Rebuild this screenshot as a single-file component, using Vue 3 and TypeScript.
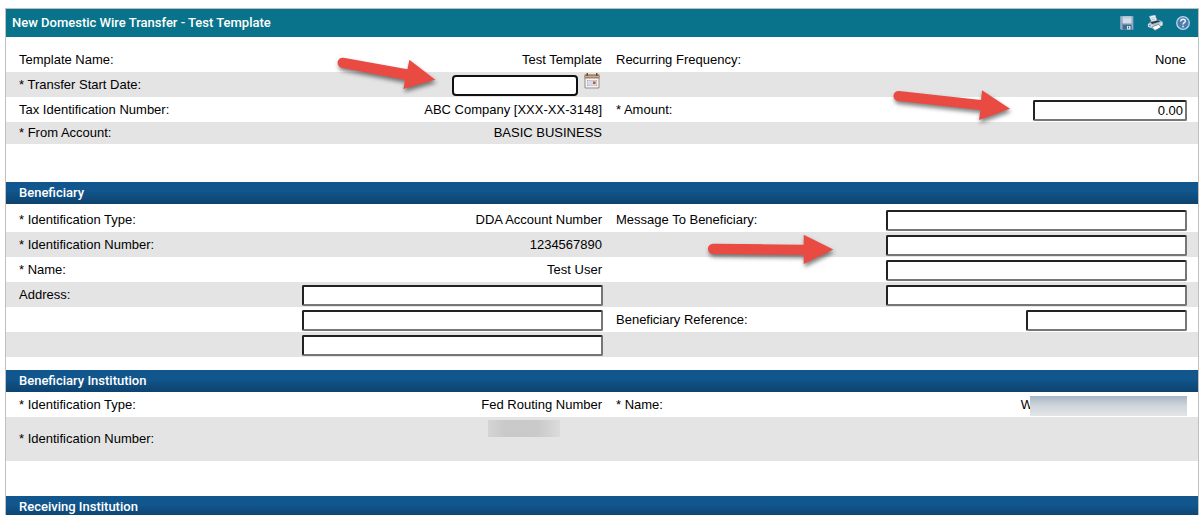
<script setup lang="ts">
import { ref } from 'vue'

interface Cell {
  id?: string
  label?: string
  value?: string
  kind?: 'text' | 'input' | 'date' | 'masked' | 'maskedTail'
  size?: 'wide' | 'mid' | 'small'
  aria?: string
}
interface Row {
  left: Cell
  right: Cell
  height?: 'first' | 'short' | 'tall'
}
interface Section {
  title: string
  name: string
  rows: Row[]
}

const form = ref<Record<string, string>>({ amount: '0.00' })

const groups: Section[] = [
  {
    title: '',
    name: 'general',
    rows: [
      {
        left: { label: 'Template Name:', value: 'Test Template' },
        right: { label: 'Recurring Frequency:', value: 'None' },
        height: 'first',
      },
      { left: { id: 'startDate', label: '* Transfer Start Date:', kind: 'date' }, right: {} },
      {
        left: { label: 'Tax Identification Number:', value: 'ABC Company [XXX-XX-3148]' },
        right: { id: 'amount', label: '* Amount:', kind: 'input', size: 'small' },
      },
      { left: { label: '* From Account:', value: 'BASIC BUSINESS' }, right: {}, height: 'short' },
    ],
  },
  {
    title: 'Beneficiary',
    name: 'beneficiary',
    rows: [
      {
        left: { label: '* Identification Type:', value: 'DDA Account Number' },
        right: { id: 'message1', label: 'Message To Beneficiary:', kind: 'input', size: 'wide' },
      },
      {
        left: { label: '* Identification Number:', value: '1234567890' },
        right: { id: 'message2', kind: 'input', size: 'wide', aria: 'Message line 2' },
      },
      {
        left: { label: '* Name:', value: 'Test User' },
        right: { id: 'message3', kind: 'input', size: 'wide', aria: 'Message line 3' },
      },
      {
        left: { id: 'address1', label: 'Address:', kind: 'input', size: 'wide' },
        right: { id: 'message4', kind: 'input', size: 'wide', aria: 'Message line 4' },
      },
      {
        left: { id: 'address2', kind: 'input', size: 'wide', aria: 'Address line 2' },
        right: { id: 'reference', label: 'Beneficiary Reference:', kind: 'input', size: 'mid' },
      },
      { left: { id: 'address3', kind: 'input', size: 'wide', aria: 'Address line 3' }, right: {} },
    ],
  },
  {
    title: 'Beneficiary Institution',
    name: 'institution',
    rows: [
      {
        left: { label: '* Identification Type:', value: 'Fed Routing Number' },
        right: { label: '* Name:', value: 'W', kind: 'maskedTail' },
      },
      { left: { label: '* Identification Number:', kind: 'masked' }, right: {}, height: 'tall' },
    ],
  },
  { title: 'Receiving Institution', name: 'receiving', rows: [] },
]
</script>

<template>
  <main class="page">
    <form class="panel" @submit.prevent>
      <header class="title-bar">
        <h1>New Domestic Wire Transfer - Test Template</h1>
        <div class="tools">
          <button type="button" class="icon-button" aria-label="Save">
            <svg width="16" height="16" viewBox="0 0 16 16">
              <path d="M1 1h13.500v14H2L1 14z" fill="#6f93b5" />
              <path d="M1.500 1.500H3V14H1.500zM12.500 1.500H14V14h-1.500z" fill="#91adc8" />
              <path d="M3.500 1.500h9v7h-9z" fill="#d3dee8" />
              <path d="M3.500 1.500h9v2h-9z" fill="#b9cbdb" />
              <path d="M4 10h8.500v4.500H4z" fill="#456b8d" />
              <path d="M8 11h3.500v3.500H8z" fill="#dfe8ef" />
              <path d="M9 11.500h1v2H9z" fill="#426887" />
            </svg>
          </button>
          <button type="button" class="icon-button" aria-label="Print">
            <svg width="16" height="16" viewBox="0 0 17 17">
              <path d="M2.500 1.500 8.500 0l2.500 7-5.500 1.500z" fill="#eef3f8" stroke="#a9c0d3" stroke-width=".6" />
              <path d="M4.500 3.500 8 2.700M5 5.200l3.700-.8" stroke="#8eabc3" stroke-width=".7" />
              <path d="M1 9.500 4 7l8-2 4.500 2v4L8 15 1 12.500z" fill="#a9bfd2" />
              <path d="M1 9.500 8 11.500l8.500-4v3.500L8 15 1 12.500z" fill="#d5e0e9" />
              <path d="M3.500 7.800 12 5.500l2 1.300-8.500 2.700z" fill="#303840" />
              <path d="m5 12.800 7.500-2.800 2.500 3-6.500 3.500z" fill="#fff" stroke="#4d6679" stroke-width=".7" />
              <path d="m2 11.200 2 .6" stroke="#4d6679" />
            </svg>
          </button>
          <button type="button" class="icon-button" aria-label="Help">
            <svg width="16" height="16" viewBox="0 0 16 16">
              <circle cx="8" cy="8" r="6.300" fill="#4b7fb0" stroke="#bcd3e6" stroke-width="1.300" />
              <path d="M5.700 6.400C5.700 3.300 10.500 3.500 10.300 6.200 10.200 7.700 8 7.800 8 9.600" fill="none" stroke="#e8f1f8" stroke-width="1.500" />
              <path d="M7.200 10.700h1.600v1.500H7.200z" fill="#e8f1f8" />
            </svg>
          </button>
        </div>
      </header>

      <section v-for="group in groups" :key="group.name" :class="['group', group.name]">
        <h2 v-if="group.title">{{ group.title }}</h2>
        <div class="rows">
          <div v-for="(row, r) in group.rows" :key="r" :class="['row', row.height]">
            <div v-for="(cell, c) in [row.left, row.right]" :key="c" class="cell">
              <label v-if="cell.id && cell.label" :for="cell.id">{{ cell.label }}</label>
              <span v-else>{{ cell.label }}</span>
              <input
                v-if="cell.kind === 'input' && cell.id"
                :id="cell.id"
                v-model="form[cell.id]"
                type="text"
                :class="['field', cell.size]"
                :aria-label="cell.aria"
              />
              <span v-else-if="cell.kind === 'date' && cell.id" class="date">
                <input :id="cell.id" v-model="form[cell.id]" type="text" class="field focused" />
                <button type="button" class="icon-button calendar" aria-label="Choose date">
                  <svg width="16" height="16" viewBox="0 0 16 16">
                    <path d="M1 2h14v13H1z" fill="#f4f5fa" stroke="#9d8780" />
                    <path d="M.500 1.500h15V5.500H.500z" fill="#a98063" />
                    <path d="M1 3h14v1H1z" fill="#cbab8d" />
                    <path d="M2.500 0H4v3H2.500zM12 0h1.500v3H12z" fill="#5f5049" />
                    <path d="M3 7h10v6H3z" fill="#a9adc2" />
                    <path d="M3 9h10M3 11h10M5 7v6M7 7v6M9 7v6M11 7v6" stroke="#f4f5fa" stroke-width=".8" />
                    <path d="M9 8.500h2.500V11H9z" fill="#b45f2d" />
                  </svg>
                </button>
              </span>
              <span v-else-if="cell.kind === 'masked'" class="mask-number"></span>
              <span v-else-if="cell.kind === 'maskedTail'" class="masked-name">{{ cell.value }}<span class="mask-name"></span></span>
              <span v-else class="value">{{ cell.value }}</span>
            </div>
          </div>
        </div>
      </section>
    </form>

    <svg class="arrows" width="1201" height="515" viewBox="0 0 1201 515" aria-hidden="true">
      <path d="M343.500 57.800 407.500 69.300 409.300 59.700 435.300 79.700 403.300 89 405.200 80 341.700 67.700A5 5 0 0 1 343.500 57.800Z" />
      <path d="M899 91 981 100 982 90.300 1010 108.700 979 120 980.300 110 898 101A5 5 0 0 1 899 91Z" />
      <path d="M713 243.700 803.700 244.700V234.700L833.300 249.500 803.700 264V255L713 254A5 5 0 0 1 713 243.700Z" />
    </svg>
  </main>
</template>

<style>
html {
  overflow: hidden;
}
</style>

<style scoped>
.page {
  position: relative;
  padding: 8px 2px 0 5px;
  background: #fff;
  color: #000;
  font: 13px/16px "Liberation Sans", Arial, sans-serif;
}
.panel {
  border: 1px solid #bfbfbf;
}
.title-bar {
  display: flex;
  align-items: center;
  justify-content: space-between;
  height: 28px;
  padding: 0 7px 0 6px;
  background: #08738a;
  color: #fff;
}
h1,
h2 {
  margin: 0;
  font-family: Roboto, "Liberation Sans", Arial, sans-serif;
  font-size: 13px;
  font-weight: 500;
}
.tools {
  display: flex;
  gap: 12px;
}
.icon-button {
  display: flex;
  width: 16px;
  padding: 0;
  border: 0;
  background: none;
}
.general {
  padding: 11px 0 38px;
}
.beneficiary {
  padding-bottom: 13px;
}
.institution {
  padding-bottom: 35px;
}
.beneficiary .rows {
  padding-top: 3px;
}
h2 {
  height: 22px;
  padding: 0 13px;
  background: linear-gradient(#11568d 40%, #0d426d);
  color: #fff;
  line-height: 22px;
}
.row {
  display: grid;
  grid-template-columns: 584fr 571fr;
  column-gap: 13px;
  height: 25px;
  padding: 0 11px 0 13px;
}
.row:nth-child(even) {
  background: #e4e4e4;
}
.row.first {
  height: 24px;
}
.row.short {
  height: 22px;
}
.row.tall {
  height: 44px;
}
.cell {
  display: flex;
  align-items: center;
  justify-content: space-between;
}
.value {
  padding-right: 1px;
}
.field {
  box-sizing: border-box;
  height: 21px;
  margin: 3px 0 1px;
  padding: 1px 2px;
  border: 2px solid;
  border-color: #222 #767676 #767676 #222;
  border-radius: 2px;
  outline: 0;
  background: #fff;
  color: #000;
  font: inherit;
  text-align: right;
}
.field.wide {
  width: 301px;
}
.field.mid {
  width: 161px;
}
.field.small {
  width: 154px;
}
.field.focused {
  width: 126px;
  border-color: #101010;
  border-radius: 4px;
}
.date {
  display: flex;
  gap: 6px;
  padding-right: 3px;
}
.calendar {
  align-self: flex-start;
  padding-top: 1px;
}
.mask-number {
  align-self: flex-start;
  width: 72px;
  height: 17px;
  margin: 3px 43px 0 0;
  background: linear-gradient(90deg, #d4d4d4, #c9c9c9 25%, #cacaca 70%, #dcdcdc);
}
.masked-name {
  display: flex;
  align-items: center;
}
.mask-name {
  width: 157px;
  height: 20px;
  margin: 3px 0 1px -3px;
  background: linear-gradient(#a5b6c6, #cdd4da 45%, #e4e5e6);
}
.arrows {
  position: absolute;
  top: 0;
  left: 0;
  fill: #e94b43;
  pointer-events: none;
  filter: drop-shadow(1px 3px 2px rgba(0, 0, 0, 0.5));
}
</style>
